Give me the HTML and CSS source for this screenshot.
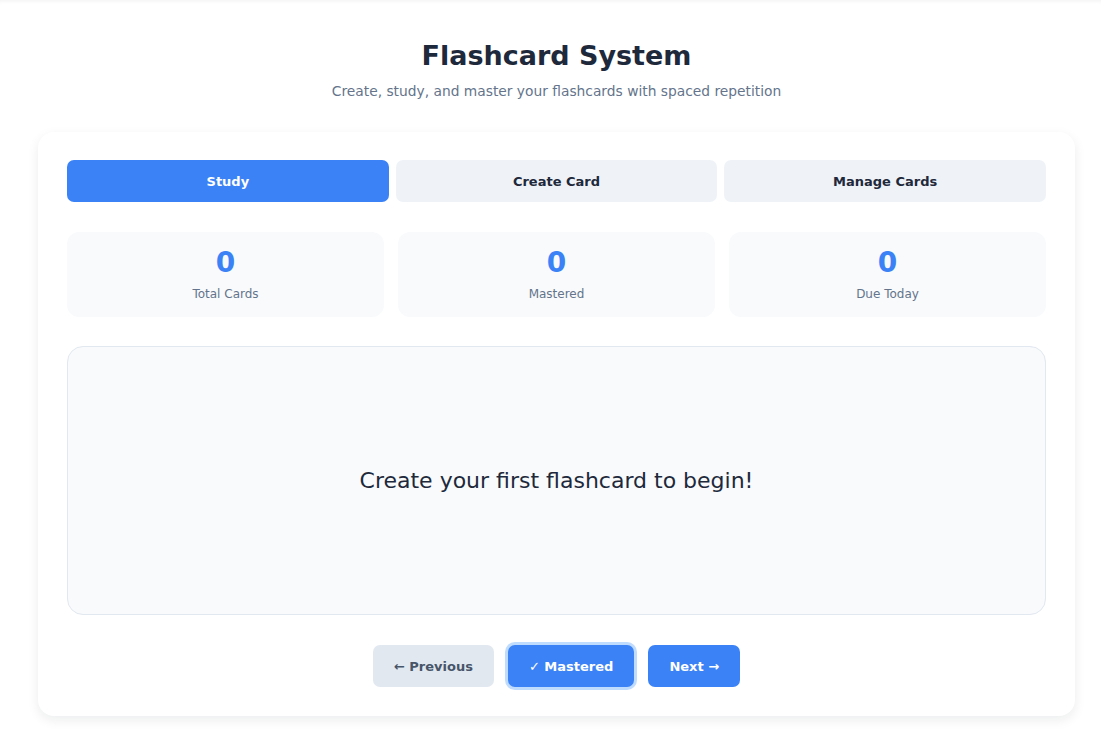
FILE: index.html
```html
<!DOCTYPE html>
<html lang="en">
<head>
<meta charset="utf-8">
<title>Flashcard System</title>
<link rel="stylesheet" href="styles.css">
</head>
<body>
<div class="page">
  <header class="header">
    <h1 class="title">Flashcard System</h1>
    <p class="subtitle">Create, study, and master your flashcards with spaced repetition</p>
  </header>
  <main class="panel">
    <nav class="tabs">
      <button class="tab tab-active">Study</button>
      <button class="tab">Create Card</button>
      <button class="tab">Manage Cards</button>
    </nav>
    <section class="stats">
      <div class="stat"><div class="stat-num">0</div><div class="stat-label">Total Cards</div></div>
      <div class="stat"><div class="stat-num">0</div><div class="stat-label">Mastered</div></div>
      <div class="stat"><div class="stat-num">0</div><div class="stat-label">Due Today</div></div>
    </section>
    <section class="flashcard">
      <p class="flash-text">Create your first flashcard to begin!</p>
    </section>
    <div class="controls">
      <button class="btn btn-grey">← Previous</button>
      <button class="btn btn-blue btn-focus">✓ Mastered</button>
      <button class="btn btn-blue">Next →</button>
    </div>
  </main>
</div>
</body>
</html>
```
FILE: styles.css
```css
* { box-sizing: border-box; }
html, body { margin: 0; padding: 0; background: #ffffff; }
body {
  font-family: "DejaVu Sans", "Noto Sans", sans-serif;
  color: #1e293b;
}
.page {
  padding: 0 26px 20px 38px;
  box-shadow: inset 0 4px 4px -3px rgba(0,0,0,0.06);
}
.header {
  text-align: center;
  padding-top: 39px;
  padding-bottom: 32px;
}
.title {
  margin: 0;
  font-size: 27px;
  font-weight: 700;
  color: #1e293b;
  line-height: 34px;
}
.subtitle {
  margin: 9px 0 0;
  font-size: 13.8px;
  color: #64748b;
  line-height: 18px;
}
.panel {
  background: #fff;
  border-radius: 16px;
  box-shadow: 0 4px 12px rgba(15, 23, 42, 0.08);
  padding: 28px 29px 29px;
}
.tabs {
  display: grid;
  grid-template-columns: 1fr 1fr 1fr;
  gap: 7px;
}
.tab {
  height: 42px;
  border: none;
  border-radius: 7px;
  background: #eff3f8;
  color: #1e293b;
  font-family: inherit;
  font-size: 13px;
  font-weight: 700;
}
.tab-active { background: #3b82f6; color: #fff; }
.stats {
  display: grid;
  grid-template-columns: 1fr 1fr 1fr;
  gap: 14px;
  margin-top: 30px;
}
.stat {
  height: 85px;
  background: #f8fafc;
  border-radius: 12px;
  text-align: center;
  padding-top: 15px;
}
.stat-num {
  font-size: 28px;
  font-weight: 700;
  color: #3b82f6;
  line-height: 32px;
}
.stat-label {
  margin-top: 8px;
  font-size: 12px;
  color: #64748b;
}
.flashcard {
  margin-top: 29px;
  height: 269px;
  background: #f8fafc;
  border: 1px solid #e2e8f0;
  border-radius: 16px;
  display: flex;
  align-items: center;
  justify-content: center;
}
.flash-text {
  margin: 0;
  font-size: 22px;
  color: #1e293b;
}
.controls {
  margin-top: 30px;
  display: flex;
  justify-content: center;
  gap: 14px;
}
.btn {
  height: 42px;
  border: none;
  border-radius: 7px;
  padding: 0 21px;
  font-family: inherit;
  font-size: 13px;
  font-weight: 700;
}
.btn-grey { background: #e2e8f0; color: #475569; }
.btn-blue { background: #3b82f6; color: #fff; }
.btn-focus { box-shadow: 0 0 0 3px #bfdbfe; }
```
